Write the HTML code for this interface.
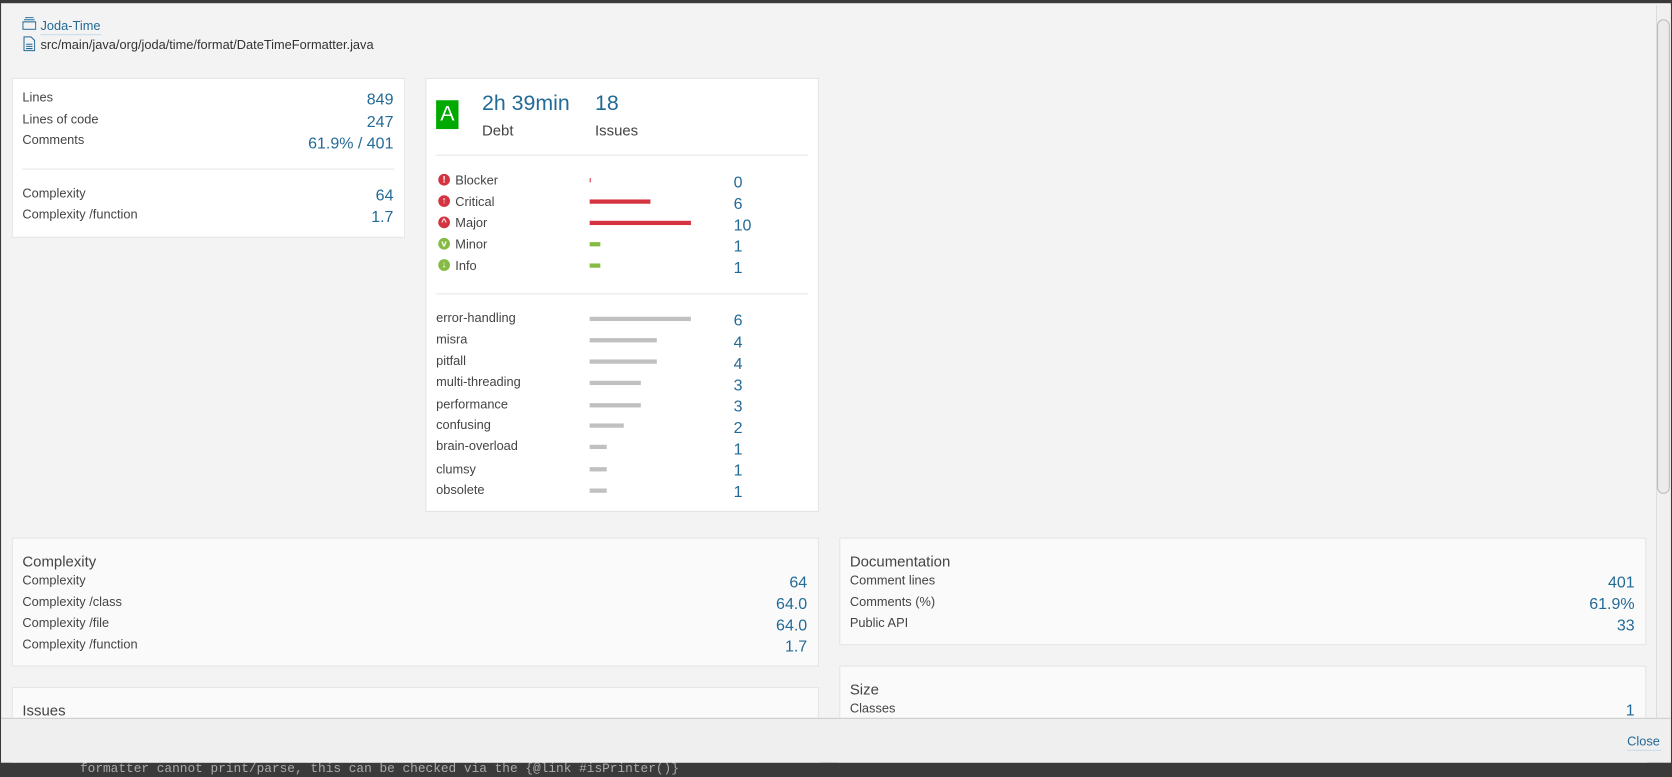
<!DOCTYPE html>
<html><head><meta charset="utf-8"><style>
*{margin:0;padding:0;box-sizing:border-box}
body{width:1672px;height:769px;background:#3a3a3a;font-family:"Liberation Sans",sans-serif;position:relative;overflow:hidden;color:#444}
#w{position:absolute;left:0;top:0;width:1568px;height:721px;transform:scale(1.0663,1.0666);transform-origin:0 0}
.a{position:absolute;white-space:nowrap}
.modal{position:absolute;left:1px;top:3px;width:1566px;height:712px;background:#f3f3f3;overflow:hidden}
.card{position:absolute;background:#fff;border:1px solid #e4e4e4}
.card2{position:absolute;background:#fafafa;border:1px solid #e4e4e4}
.l{font-size:12px;color:#444;line-height:14px}
.v{font-size:15px;color:#236a97;line-height:16px}
.vr{text-align:right}
.hr{position:absolute;height:1px;background:#e6e6e6}
.bar{position:absolute;height:4px}
.ic{position:absolute;width:11px;height:11px;border-radius:50%;color:#fff;font-size:9px;line-height:11px;text-align:center;font-weight:bold}
.t{font-size:14px;color:#444;line-height:16px}
</style></head><body>
<div id="w">
<div class="a" style="left:75px;top:714px;font-family:'Liberation Mono',monospace;font-size:12px;color:#aaa;line-height:14px">formatter cannot print/parse, this can be checked via the {@link #isPrinter()}</div>
<div class="modal">
<svg class="a" style="left:20px;top:13px" width="13" height="12" viewBox="0 0 13 12"><g fill="none" stroke="#236a97" stroke-width="1"><rect x="0.5" y="4.5" width="12" height="7"/><line x1="1.5" y1="2.5" x2="11.5" y2="2.5"/><line x1="2.5" y1="0.5" x2="10.5" y2="0.5"/></g></svg>
<div class="a l" style="left:37px;top:14px;color:#236a97">Joda-Time</div>
<div class="a" style="left:37px;top:29px;width:57px;height:1px;background:#c8dbe8"></div>
<svg class="a" style="left:21px;top:31px" width="11" height="14" viewBox="0 0 11 14"><g fill="none" stroke="#236a97" stroke-width="1"><path d="M0.5 0.5H7L10.5 4V13.5H0.5Z"/><path d="M2.5 7.5H8.5M2.5 9.5H8.5M2.5 11.5H8.5"/></g></svg>
<div class="a l" style="left:37px;top:32px;color:#333">src/main/java/org/joda/time/format/DateTimeFormatter.java</div>

<div class="card" style="left:10px;top:70px;width:369px;height:150px"></div>
<div class="a l" style="left:20px;top:81px">Lines</div><div class="a v vr" style="left:200px;width:168px;top:83px">849</div>
<div class="a l" style="left:20px;top:102px">Lines of code</div><div class="a v vr" style="left:200px;width:168px;top:104px">247</div>
<div class="a l" style="left:20px;top:121px">Comments</div><div class="a v vr" style="left:200px;width:168px;top:124px">61.9% / 401</div>
<div class="hr" style="left:20px;top:155px;width:349px"></div>
<div class="a l" style="left:20px;top:171px">Complexity</div><div class="a v vr" style="left:200px;width:168px;top:173px">64</div>
<div class="a l" style="left:20px;top:191px">Complexity /function</div><div class="a v vr" style="left:200px;width:168px;top:193px">1.7</div>

<div class="card" style="left:398px;top:70px;width:369px;height:407px"></div>
<div class="a" style="left:408px;top:91px;width:21px;height:27px;background:#00aa00;color:#fff;font-size:20px;line-height:27px;text-align:center">A</div>
<div class="a" style="left:451px;top:83px;font-size:20px;color:#236a97;line-height:22px">2h 39min</div>
<div class="a" style="left:557px;top:83px;font-size:20px;color:#236a97;line-height:22px">18</div>
<div class="a t" style="left:451px;top:111px">Debt</div>
<div class="a t" style="left:557px;top:111px">Issues</div>
<div class="hr" style="left:408px;top:142px;width:349px"></div>

<div class="ic" style="left:410px;top:160px;background:#d4333f">!</div><div class="a l" style="left:426px;top:159px">Blocker</div><div class="bar" style="left:552px;top:164px;width:1px;background:#d4333f"></div><div class="a v" style="left:687px;top:161px">0</div>
<div class="ic" style="left:410px;top:180px;background:#d4333f">↑</div><div class="a l" style="left:426px;top:179px">Critical</div><div class="bar" style="left:552px;top:184px;width:57px;background:#d4333f"></div><div class="a v" style="left:687px;top:181px">6</div>
<div class="ic" style="left:410px;top:200px;background:#d4333f">^</div><div class="a l" style="left:426px;top:199px">Major</div><div class="bar" style="left:552px;top:204px;width:95px;background:#d4333f"></div><div class="a v" style="left:687px;top:201px">10</div>
<div class="ic" style="left:410px;top:220px;background:#85bb43">v</div><div class="a l" style="left:426px;top:219px">Minor</div><div class="bar" style="left:552px;top:224px;width:10px;background:#85bb43"></div><div class="a v" style="left:687px;top:221px">1</div>
<div class="ic" style="left:410px;top:240px;background:#85bb43">↓</div><div class="a l" style="left:426px;top:239px">Info</div><div class="bar" style="left:552px;top:244px;width:10px;background:#85bb43"></div><div class="a v" style="left:687px;top:241px">1</div>
<div class="hr" style="left:408px;top:272px;width:349px"></div>

<div class="a l" style="left:408px;top:288px">error-handling</div><div class="bar" style="left:552px;top:294px;width:95px;background:#c0c0c0"></div><div class="a v" style="left:687px;top:290px">6</div>
<div class="a l" style="left:408px;top:308px">misra</div><div class="bar" style="left:552px;top:314px;width:63px;background:#c0c0c0"></div><div class="a v" style="left:687px;top:311px">4</div>
<div class="a l" style="left:408px;top:328px">pitfall</div><div class="bar" style="left:552px;top:334px;width:63px;background:#c0c0c0"></div><div class="a v" style="left:687px;top:331px">4</div>
<div class="a l" style="left:408px;top:348px">multi-threading</div><div class="bar" style="left:552px;top:354px;width:48px;background:#c0c0c0"></div><div class="a v" style="left:687px;top:351px">3</div>
<div class="a l" style="left:408px;top:369px">performance</div><div class="bar" style="left:552px;top:375px;width:48px;background:#c0c0c0"></div><div class="a v" style="left:687px;top:371px">3</div>
<div class="a l" style="left:408px;top:388px">confusing</div><div class="bar" style="left:552px;top:394px;width:32px;background:#c0c0c0"></div><div class="a v" style="left:687px;top:391px">2</div>
<div class="a l" style="left:408px;top:408px">brain-overload</div><div class="bar" style="left:552px;top:414px;width:16px;background:#c0c0c0"></div><div class="a v" style="left:687px;top:411px">1</div>
<div class="a l" style="left:408px;top:430px">clumsy</div><div class="bar" style="left:552px;top:435px;width:16px;background:#c0c0c0"></div><div class="a v" style="left:687px;top:431px">1</div>
<div class="a l" style="left:408px;top:449px">obsolete</div><div class="bar" style="left:552px;top:455px;width:16px;background:#c0c0c0"></div><div class="a v" style="left:687px;top:451px">1</div>

<div class="card2" style="left:10px;top:501px;width:757px;height:121px"></div>
<div class="a t" style="left:20px;top:515px">Complexity</div>
<div class="a l" style="left:20px;top:534px">Complexity</div><div class="a v vr" style="left:556px;width:200px;top:536px">64</div>
<div class="a l" style="left:20px;top:554px">Complexity /class</div><div class="a v vr" style="left:556px;width:200px;top:556px">64.0</div>
<div class="a l" style="left:20px;top:574px">Complexity /file</div><div class="a v vr" style="left:556px;width:200px;top:576px">64.0</div>
<div class="a l" style="left:20px;top:594px">Complexity /function</div><div class="a v vr" style="left:556px;width:200px;top:596px">1.7</div>

<div class="card2" style="left:786px;top:501px;width:757px;height:101px"></div>
<div class="a t" style="left:796px;top:515px">Documentation</div>
<div class="a l" style="left:796px;top:534px">Comment lines</div><div class="a v vr" style="left:1332px;width:200px;top:536px">401</div>
<div class="a l" style="left:796px;top:554px">Comments (%)</div><div class="a v vr" style="left:1332px;width:200px;top:556px">61.9%</div>
<div class="a l" style="left:796px;top:574px">Public API</div><div class="a v vr" style="left:1332px;width:200px;top:576px">33</div>

<div class="card2" style="left:786px;top:621px;width:757px;height:100px"></div>
<div class="a t" style="left:796px;top:635px">Size</div>
<div class="a l" style="left:796px;top:654px">Classes</div><div class="a v vr" style="left:1332px;width:200px;top:656px">1</div>
<div class="card2" style="left:10px;top:641px;width:757px;height:80px"></div>
<div class="a t" style="left:20px;top:655px">Issues</div>

<div class="a" style="left:1552px;top:2px;width:14px;height:668px;background:#f0f0f0;border-left:1px solid #ddd"></div>
<div class="a" style="left:1553px;top:15px;width:12px;height:445px;background:#ebebea;border:1px solid #bbb;border-radius:6px"></div>

<div class="a" style="left:0;top:670px;width:1566px;height:45px;background:#efefef;border-top:1px solid #ccc"></div>
<div class="a l" style="left:1525px;top:685px;color:#236a97">Close</div>
<div class="a" style="left:1525px;top:700px;width:32px;height:1px;background:#c8dbe8"></div>
</div>
</div>
</body></html>
